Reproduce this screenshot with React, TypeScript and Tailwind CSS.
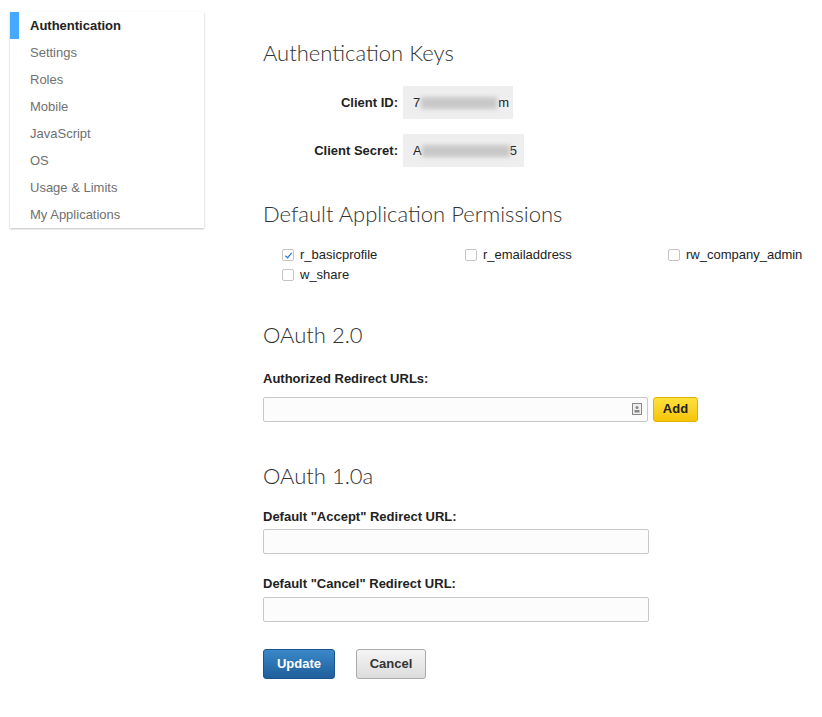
import React from "react";

const H = ({ children, cls }: { children: React.ReactNode; cls: string }) => (
  <h2 className={`text-[22px] leading-[28px] text-[#333] font-light ${cls}`} style={{ fontFamily: "Lato, 'Open Sans', sans-serif" }}>{children}</h2>
);

const Box = ({ checked, label, w }: { checked?: boolean; label: string; w: string }) => (
  <label className={`flex items-center gap-[6px] h-[20px] ${w}`}>
    <span className="w-[12px] h-[12px] border border-[#c4c4c4] rounded-[2px] bg-white flex items-center justify-center">
      {checked && (
        <svg width="9" height="9" viewBox="0 0 10 10"><path d="M1.5 5.2 L4 7.5 L8.5 2" fill="none" stroke="#2d7dd2" strokeWidth="1.4" /></svg>
      )}
    </span>
    <span className="text-[13px] text-[#222]">{label}</span>
  </label>
);

export default function App() {
  const items = ["Authentication", "Settings", "Roles", "Mobile", "JavaScript", "OS", "Usage & Limits", "My Applications"];
  return (
    <div className="flex bg-white w-[822px] h-[717px] text-[#222]" style={{ fontFamily: "'Liberation Sans', Arial, sans-serif" }}>
      <div className="ml-[10px] mt-[12px] w-[195px] h-[216px] shadow-[0_1px_2px_rgba(0,0,0,0.25)] bg-white py-0">
        {items.map((t, i) => (
          <div key={t} className="relative h-[27px] flex items-center pl-[20px] text-[13px]">
            {i === 0 && <span className="absolute left-0 top-0 w-[9px] h-[27px] bg-[#45aaff]" />}
            <span className={i === 0 ? "font-bold text-[#222]" : "text-[#707070]"}>{t}</span>
          </div>
        ))}
      </div>
      <div className="ml-[59px] flex flex-col">
        <H cls="mt-[39px]">Authentication Keys</H>
        <div className="mt-[19px] flex items-center">
          <span className="w-[135px] text-right text-[13px] font-bold">Client ID:</span>
          <span className="ml-[5px] w-[110px] h-[33px] bg-[#eee] flex items-center pl-[10px] text-[13px]">
            7<span className="inline-block w-[76px] h-[12px] bg-[#c8c8c8] blur-[2px] mx-[1px]" />m
          </span>
        </div>
        <div className="mt-[15px] flex items-center">
          <span className="w-[135px] text-right text-[13px] font-bold">Client Secret:</span>
          <span className="ml-[5px] w-[121px] h-[33px] bg-[#eee] flex items-center pl-[10px] text-[13px]">
            A<span className="inline-block w-[88px] h-[12px] bg-[#c8c8c8] blur-[2px]" />5
          </span>
        </div>
        <H cls="mt-[33px]">Default Application Permissions</H>
        <div className="mt-[17px] ml-[19px] flex flex-wrap w-[540px]">
          <Box checked label="r_basicprofile" w="w-[183px]" />
          <Box label="r_emailaddress" w="w-[203px]" />
          <Box label="rw_company_admin" w="w-[150px]" />
          <Box label="w_share" w="w-[183px]" />
        </div>
        <H cls="mt-[36px]">OAuth 2.0</H>
        <div className="mt-[20px] text-[13px] font-bold">Authorized Redirect URLs:</div>
        <div className="mt-[8px] flex gap-[5px]">
          <div className="w-[385px] h-[25px] border border-[#c8c8c8] rounded-[2px] bg-[#fcfcfc] flex items-center justify-end pr-[5px]">
            <svg width="10" height="12" viewBox="0 0 10 12"><rect x="0.5" y="0.5" width="9" height="11" fill="#eee" stroke="#888" /><circle cx="5" cy="4.5" r="1.5" fill="#888" /><rect x="2.5" y="7" width="5" height="2.5" fill="#888" /></svg>
          </div>
          <button className="w-[45px] h-[25px] rounded-[3px] bg-gradient-to-b from-[#ffe13a] to-[#f5c400] border border-[#e0b000] text-[13px] font-bold text-[#222]">Add</button>
        </div>
        <H cls="mt-[40px]">OAuth 1.0a</H>
        <div className="mt-[17px] text-[13px] font-bold">Default "Accept" Redirect URL:</div>
        <div className="mt-[3px] w-[386px] h-[25px] border border-[#c8c8c8] rounded-[2px] bg-[#fcfcfc]" />
        <div className="mt-[20px] text-[13px] font-bold">Default "Cancel" Redirect URL:</div>
        <div className="mt-[3px] w-[386px] h-[25px] border border-[#c8c8c8] rounded-[2px] bg-[#fcfcfc]" />
        <div className="mt-[27px] flex gap-[21px]">
          <button className="w-[72px] h-[30px] rounded-[3px] bg-gradient-to-b from-[#3a88c8] to-[#1f5f9c] border border-[#1a5490] text-white text-[13px] font-bold">Update</button>
          <button className="w-[70px] h-[30px] rounded-[3px] bg-gradient-to-b from-[#f5f5f5] to-[#dcdcdc] border border-[#aaa] text-[#333] text-[13px] font-bold">Cancel</button>
        </div>
      </div>
    </div>
  );
}
